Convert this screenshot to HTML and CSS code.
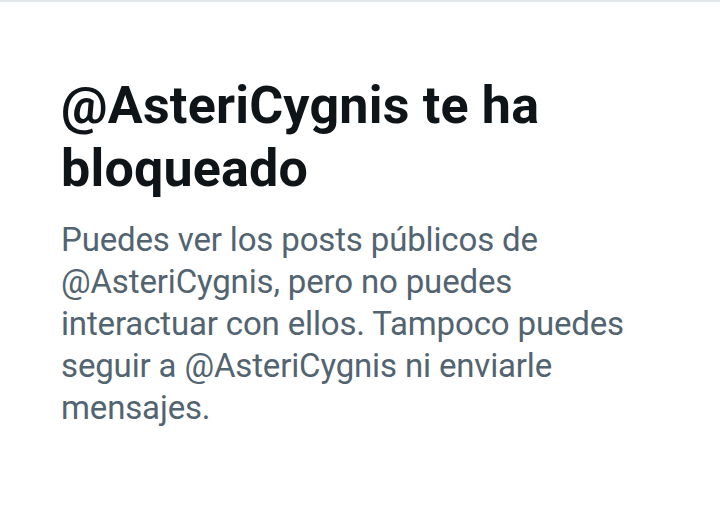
FILE: index.html
```html
<!DOCTYPE html>
<html lang="es">
<head>
    <meta charset="UTF-8">
    <meta name="viewport" content="width=device-width, initial-scale=1.0">
    <title>Bloqueado</title>
    <link rel="stylesheet" href="styles.css">
</head>
<body>
    <!-- Blocked notice -->
    <div class="notice">
        <h1 class="notice-title">@AsteriCygnis te ha bloqueado</h1>
        <p class="notice-text">Puedes ver los posts públicos de @AsteriCygnis, pero no puedes interactuar con ellos. Tampoco puedes seguir a @AsteriCygnis ni enviarle mensajes.</p>
    </div>
</body>
</html>
```

FILE: styles.css
```css
/* General */
body {
    margin: 0;
    padding: 0;
    background: #ffffff;
    font-family: Roboto, "Noto Sans", sans-serif;
    height: 100vh;
    overflow: hidden;
    border-top: 2px solid #e3e6e8;
    box-sizing: border-box;
}

.notice {
    padding: 72px 62px 0 61px;
}

.notice-title {
    margin: 0;
    color: #0f1419;
    font-size: 52px;
    font-weight: 700;
    line-height: 63px;
    letter-spacing: 0.2px;
}

.notice-text {
    margin: 19px 0 0 0;
    color: #536471;
    font-size: 33px;
    font-weight: 400;
    line-height: 42px;
    letter-spacing: -0.15px;
}
```
